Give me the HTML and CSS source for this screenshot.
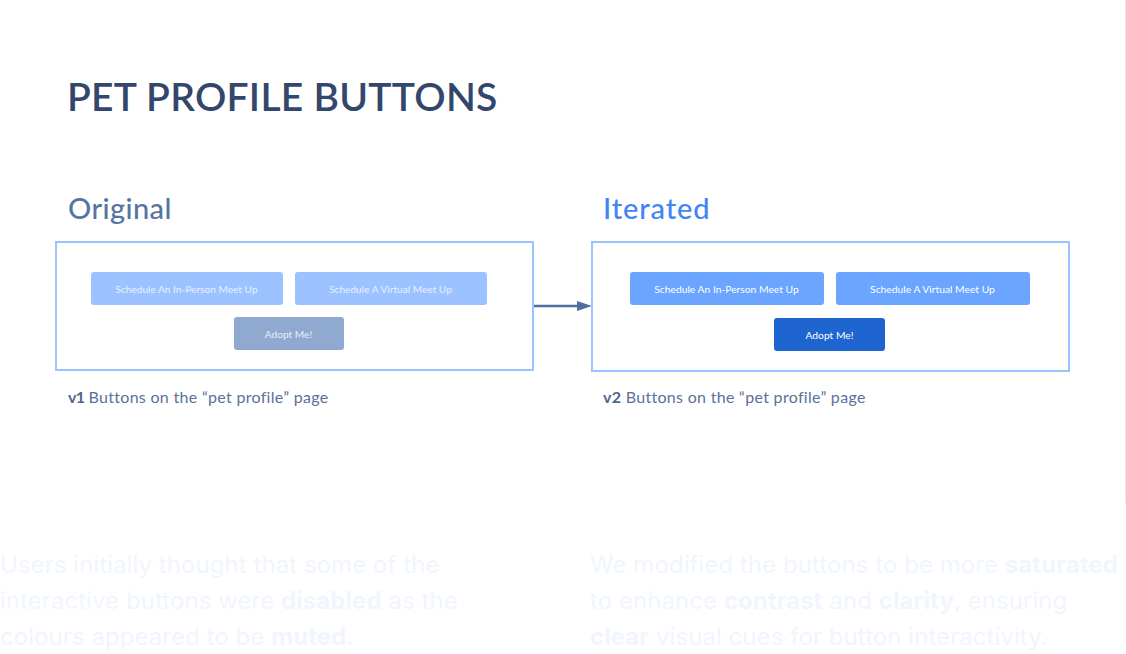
FILE: index.html
```html
<!DOCTYPE html>
<html lang="en">
<head>
    <meta charset="UTF-8">
    <title>Pet Profile Buttons</title>
    <link rel="stylesheet" href="styles.css">
</head>
<body>
    <section class="board">
        <h1 class="board-title">PET PROFILE BUTTONS</h1>
        <div class="compare">
            <h2 class="version-name">Original</h2>
            <div></div>
            <h2 class="version-name iterated">Iterated</h2>

            <div class="shot shot-v1">
                <div class="btn-row">
                    <span class="btn btn-wide">Schedule An In-Person Meet Up</span>
                    <span class="btn btn-wide">Schedule A Virtual Meet Up</span>
                </div>
                <span class="btn btn-adopt">Adopt Me!</span>
            </div>
            <svg class="arrow" width="58" height="14" viewBox="0 0 58 14">
                <path d="M0 7H46" stroke="#4f6f9f" stroke-width="2.5"/>
                <path d="M43 2L58 7L43 12Z" fill="#4f6f9f"/>
            </svg>
            <div class="shot shot-v2">
                <div class="btn-row">
                    <span class="btn btn-wide">Schedule An In-Person Meet Up</span>
                    <span class="btn btn-wide">Schedule A Virtual Meet Up</span>
                </div>
                <span class="btn btn-adopt">Adopt Me!</span>
            </div>

            <p class="caption caption-v1"><b>v1</b> Buttons on the “pet profile” page</p>
            <div></div>
            <p class="caption caption-v2"><b>v2</b> Buttons on the “pet profile” page</p>
        </div>
    </section>
    <section class="notes">
        <p>Users initially thought that some of the interactive buttons were <b>disabled</b> as the colours appeared to be <b>muted</b>.</p>
        <p>We modified the buttons to be more <b>saturated</b> to enhance <b>contrast</b> and <b>clarity</b>, ensuring <b>clear</b> visual cues for button interactivity.</p>
    </section>
</body>
</html>
```

FILE: styles.css
```css
html, body {
    margin: 0;
    padding: 0;
    background-color: #fff;
    overflow: hidden;
}

body {
    width: 1126px;
    height: 654px;
}

.board {
    box-sizing: border-box;
    height: 503px;
    padding: 71px 0 0 55px;
    border-right: 1px solid #e6e6e6;
}

.board-title {
    margin: 0 0 0 12px;
    font-family: "Lato", sans-serif;
    font-size: 39px;
    line-height: 50px;
    font-weight: 600;
    color: #33466b;
    letter-spacing: 0.27px;
}

.compare {
    display: grid;
    grid-template-columns: 479px 57px 479px;
    align-items: start;
    margin-top: 69px;
}

.version-name {
    margin: 0 0 15px 13px;
    font-family: "Lato", sans-serif;
    font-size: 29px;
    line-height: 36px;
    font-weight: 500;
    color: #5574a3;
    letter-spacing: 0.4px;
}

.version-name.iterated {
    margin-left: 12px;
    color: #4285f4;
    letter-spacing: 0.9px;
}

.shot {
    box-sizing: border-box;
    border: 2px solid #9cc2ff;
    display: flex;
    flex-direction: column;
    align-items: center;
}

.shot-v1 {
    height: 130px;
    gap: 12px;
    padding: 29px 12px 0 0;
}

.shot-v2 {
    height: 131px;
    gap: 13px;
    padding: 29px 2px 0 0;
}

.btn-row {
    display: flex;
    gap: 12px;
}

.btn {
    display: flex;
    align-items: center;
    justify-content: center;
    height: 33px;
    border-radius: 3px;
    color: #fff;
    font-family: "Lato", sans-serif;
}

.shot-v1 .btn {
    font-size: 10.15px;
}

.shot-v2 .btn {
    font-size: 10.3px;
}

.shot-v1 .btn-wide {
    width: 192px;
    background-color: #9cc2ff;
    color: #e8f0ff;
}

.shot-v1 .btn-adopt {
    width: 110px;
    background-color: #90a9d0;
    color: #e8eef8;
}

.shot-v2 .btn-wide {
    width: 194px;
    background-color: #6ba5ff;
}

.shot-v2 .btn-adopt {
    width: 111px;
    background-color: #1f65d0;
}

.arrow {
    display: block;
    align-self: center;
    margin-bottom: 2px;
}

.caption {
    margin: 15px 0 0 13px;
    font-family: "Lato", sans-serif;
    font-size: 16px;
    line-height: 20px;
    color: #5a7199;
    letter-spacing: 0.3px;
}

.caption-v2 {
    margin-left: 12px;
}

.caption b {
    font-weight: 700;
    color: #4d6691;
}

.caption-v1 b {
    letter-spacing: -0.8px;
}

.notes {
    display: grid;
    grid-template-columns: 590px 536px;
    margin-top: 44px;
    font-family: "Inter", sans-serif;
    font-size: 24px;
    line-height: 36px;
    letter-spacing: 0.06px;
    color: #f1f5fe;
}

.notes p {
    margin: 0;
    padding-right: 90px;
}

.notes p:last-child {
    padding-right: 0;
}
```
